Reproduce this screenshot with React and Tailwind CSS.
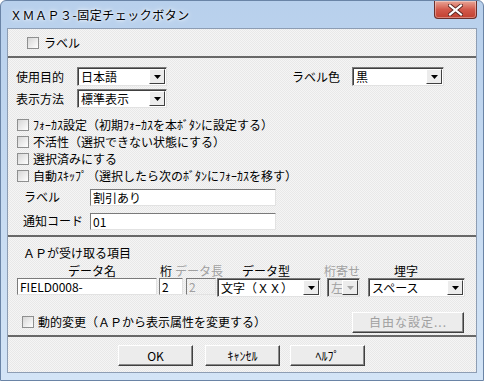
const font = "font-['Noto_Sans_CJK_JP',sans-serif]"

function Check() {
  return (
    <span className="w-[12px] h-[12px] shrink-0 border border-[#8e8f8f] bg-gradient-to-br from-[#d6d6d6] to-white" />
  )
}

function Arrow({ disabled }) {
  return (
    <span className="w-[16px] h-full shrink-0 flex items-center justify-center bg-[#ececec] border border-t-white border-l-white border-r-[#404040] border-b-[#404040]">
      <svg width="7" height="4" viewBox="0 0 7 4">
        <path d="M0 0h7L3.5 4z" fill={disabled ? '#a6a6a6' : '#000'} />
      </svg>
    </span>
  )
}

function Select({ value, className, disabled }) {
  return (
    <div
      className={`flex h-[19px] p-[1px] border border-t-[#7a7a7a] border-l-[#7a7a7a] border-r-[#e2e2e2] border-b-[#e2e2e2] shadow-[inset_1px_1px_0_#404040] ${disabled ? 'bg-[#ececec] text-[#a0a0a0]' : 'bg-white'} ${className}`}
    >
      <span className="flex-1 pl-[2px] leading-[15px] whitespace-nowrap overflow-hidden">{value}</span>
      <Arrow disabled={disabled} />
    </div>
  )
}

function Input({ value, className, disabled }) {
  return (
    <div
      className={`h-[17px] pl-[2px] leading-[15px] border border-t-[#7a7a7a] border-l-[#7a7a7a] border-r-[#e2e2e2] border-b-[#e2e2e2] whitespace-nowrap ${disabled ? 'text-[#a0a0a0]' : 'bg-white'} ${className}`}
    >
      {value}
    </div>
  )
}

function Button({ children, className, disabled }) {
  return (
    <div
      className={`h-[21px] flex items-center justify-center bg-[#ececec] border border-t-white border-l-white border-r-[#404040] border-b-[#404040] shadow-[inset_-1px_-1px_0_#8a8a8a] ${disabled ? 'text-[#a0a0a0]' : ''} ${className}`}
    >
      {children}
    </div>
  )
}

function CheckRow({ children }) {
  return (
    <div className="h-[17px] flex items-center pl-[1px]">
      <Check />
      <span className="ml-[4px] whitespace-nowrap">{children}</span>
    </div>
  )
}

const Line = () => <div className="h-[2px] bg-[#686868]" />

export default function App() {
  return (
    <div
      className={`${font} text-[12px] text-black w-[484px] h-[381px] flex flex-col rounded-t-[6px] border border-[#6a84a6] bg-gradient-to-b from-[#b8d0ec] to-[#d3e4f6]`}
    >
      {/* title bar */}
      <div className="h-[27px] flex shrink-0">
        <div className="pl-[9px] flex items-center tracking-[0.5px] [text-shadow:0_0_6px_#fff,0_0_3px_#fff]">
          ＸＭＡＰ３-固定チェックボタン
        </div>
        <div className="ml-auto mr-[6px] w-[43px] h-[18px] rounded-b-[4px] border border-t-0 border-[#6b2f2a] bg-gradient-to-b from-[#e7a597] via-[#d2594b] to-[#c2402f] flex items-center justify-center shadow-[inset_0_0_0_1px_rgba(255,255,255,0.35)]">
          <svg width="15" height="12" viewBox="0 0 15 12">
            <path d="M2 1.5l11 9M13 1.5l-11 9" stroke="#5a2520" strokeWidth="4" strokeLinecap="square" />
            <path d="M2 1.5l11 9M13 1.5l-11 9" stroke="#fff" strokeWidth="2.2" strokeLinecap="square" />
          </svg>
        </div>
      </div>

      {/* client */}
      <div className="flex-1 mx-[6px] mb-[7px] flex flex-col border border-[#8d9db3] bg-[repeating-conic-gradient(#e8e8e8_0_25%,#f5f5f5_0_50%)] bg-[length:2px_2px]">
        {/* section 1 */}
        <div className="h-[27px] flex items-center pl-[19px] pt-[1px]">
          <Check />
          <span className="ml-[5px]">ラベル</span>
        </div>
        <Line />

        {/* section 2 */}
        <div className="h-[177px] pt-[9px] pl-[8px]">
          <div className="flex items-center h-[19px]">
            <span className="w-[61px]">使用目的</span>
            <Select value="日本語" className="w-[90px]" />
            <span className="ml-auto">ラベル色</span>
            <Select value="黒" className="w-[92px] ml-[12px] mr-[32px]" />
          </div>
          <div className="flex items-center h-[19px] mt-[3px]">
            <span className="w-[61px]">表示方法</span>
            <Select value="標準表示" className="w-[90px]" />
          </div>
          <div className="mt-[8px]">
            <CheckRow>ﾌｫｰｶｽ設定（初期ﾌｫｰｶｽを本ﾎﾞﾀﾝに設定する）</CheckRow>
            <CheckRow>不活性（選択できない状態にする）</CheckRow>
            <CheckRow>選択済みにする</CheckRow>
            <CheckRow>自動ｽｷｯﾌﾟ（選択したら次のﾎﾞﾀﾝにﾌｫｰｶｽを移す）</CheckRow>
          </div>
          <div className="flex items-center mt-[4px]">
            <span className="w-[74px] pl-[8px] whitespace-nowrap">ラベル</span>
            <Input value="割引あり" className="w-[186px]" />
          </div>
          <div className="flex items-center mt-[6px]">
            <span className="w-[74px] pl-[7px] whitespace-nowrap">通知コード</span>
            <Input value="01" className="w-[186px]" />
          </div>
        </div>
        <Line />

        {/* section 3 */}
        <div className="h-[98px] pt-[9px] pl-[9px]">
          <div className="leading-[14px] pl-[6px]">ＡＰが受け取る項目</div>
          <div className="flex h-[12px] leading-[12px] mt-[5px] whitespace-nowrap">
            <span className="ml-[51px]">データ名</span>
            <span className="ml-[44px]">桁</span>
            <span className="ml-[3px] text-[#a0a0a0]">データ長</span>
            <span className="ml-[19px]">データ型</span>
            <span className="ml-[34px] text-[#a0a0a0]">桁寄せ</span>
            <span className="ml-[34px]">埋字</span>
          </div>
          <div className="flex mt-[1px]">
            <Input value="FIELD0008-" className="w-[140px]" />
            <Input value="2" className="w-[24px] ml-[2px]" />
            <Input value="2" className="w-[30px] ml-[3px]" disabled />
            <Select value="文字（ＸＸ）" className="w-[104px] ml-[1px] h-[17px]" />
            <Select value="左" className="w-[33px] ml-[6px] h-[17px]" disabled />
            <Select value="スペース" className="w-[97px] ml-[8px] h-[17px]" />
          </div>
          <div className="flex items-center h-[20px] mt-[15px]">
            <span className="ml-[5px] flex items-center">
              <Check />
              <span className="ml-[4px]">動的変更（ＡＰから表示属性を変更する）</span>
            </span>
            <Button className="ml-auto mr-[12px] w-[112px] h-[20px] tracking-[1px]" disabled>
              自由な設定...
            </Button>
          </div>
        </div>
        <Line />

        {/* section 4 */}
        <div className="flex-1 flex pt-[8px] pl-[110px]">
          <Button className="w-[75px]">OK</Button>
          <Button className="w-[75px] ml-[12px]">ｷｬﾝｾﾙ</Button>
          <Button className="w-[75px] ml-[10px]">ﾍﾙﾌﾟ</Button>
        </div>
      </div>
    </div>
  )
}
